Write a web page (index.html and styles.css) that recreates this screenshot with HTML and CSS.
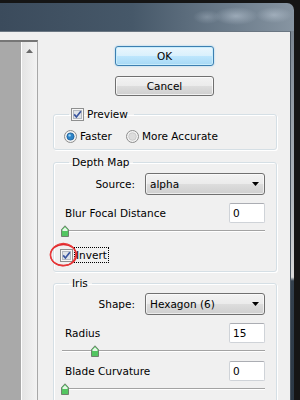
FILE: index.html
```html
<!DOCTYPE html>
<html lang="en">
  <head>
    <meta charset="UTF-8" />
    <title>Lens Blur</title>
    <link rel="stylesheet" href="styles.css">
  </head>
  <body>
    <div class="window">
      <div class="titlebar"></div>
      <div class="frame">
        <div class="client">
          <!-- preview area, cut off at the left -->
          <div class="preview-pane">
            <div class="preview-image"></div>
            <div class="scrollbar">
              <svg class="scroll-up" width="7" height="4" viewBox="0 0 7 4"><path d="M3.5 0L7 4H0z" fill="#6a6a6a"/></svg>
            </div>
          </div>

          <div class="controls">
            <button class="btn btn-default">OK</button>
            <button class="btn">Cancel</button>

            <fieldset class="group group-preview">
              <legend>
                <label class="check">
                  <svg width="13" height="13" viewBox="0 0 13 13"><rect x="0.5" y="0.5" width="12" height="12" fill="#f6f6f6" stroke="#8e8f8f"/><rect x="2.5" y="2.5" width="8" height="8" fill="#dfe3e8" stroke="#b4b9c0"/><path d="M3.2 6.4L5.4 9L9.9 3.2" fill="none" stroke="#3a56a0" stroke-width="1.7"/></svg>
                  Preview
                </label>
              </legend>
              <div class="radio-row">
                <label class="radio">
                  <svg width="13" height="13" viewBox="0 0 13 13"><circle cx="6.5" cy="6.5" r="6" fill="#f3f3f3" stroke="#8c8c8c"/><circle cx="6.5" cy="6.5" r="3.6" fill="#2d84c8" stroke="#1b5c96" stroke-width="0.8"/><circle cx="5.6" cy="5.4" r="1.2" fill="#9fd6f5"/></svg>
                  Faster
                </label>
                <label class="radio">
                  <svg width="13" height="13" viewBox="0 0 13 13"><circle cx="6.5" cy="6.5" r="6" fill="#f3f3f3" stroke="#8c8c8c"/><circle cx="6.5" cy="6.5" r="3.8" fill="#dcdcdc" stroke="#c4c4c4" stroke-width="0.8"/></svg>
                  More Accurate
                </label>
              </div>
            </fieldset>

            <fieldset class="group">
              <legend>Depth Map</legend>
              <div class="field-row">
                <span class="field-label">Source:</span>
                <div class="combo">
                  <span>alpha</span>
                  <svg width="7" height="4" viewBox="0 0 7 4"><path d="M0 0H7L3.5 4z" fill="#000"/></svg>
                </div>
              </div>
              <div class="value-row">
                <span>Blur Focal Distance</span>
                <div class="num-box">0</div>
              </div>
              <div class="slider">
                <div class="slider-track"></div>
                <svg class="thumb" style="left: -1px" width="8" height="12" viewBox="0 0 8 12"><path d="M0.5 4.5L4 0.8L7.5 4.5V11.5H0.5z" fill="#52c660" stroke="#71826f"/><path d="M1.5 4.8L4 2.2L6.5 4.8V6H1.5z" fill="#e6f6e6"/></svg>
              </div>
              <div class="invert-row">
                <span class="check-wrap">
                  <svg width="13" height="13" viewBox="0 0 13 13"><rect x="0.5" y="0.5" width="12" height="12" fill="#f6f6f6" stroke="#8e8f8f"/><rect x="2.5" y="2.5" width="8" height="8" fill="#dfe3e8" stroke="#b4b9c0"/><path d="M3.2 6.4L5.4 9L9.9 3.2" fill="none" stroke="#3a56a0" stroke-width="1.7"/></svg>
                  <svg class="annotation" width="30" height="26" viewBox="0 0 30 26"><ellipse cx="14.5" cy="13" rx="13" ry="10.6" fill="none" stroke="#e0262b" stroke-width="1.5"/><ellipse cx="14" cy="12.6" rx="12.6" ry="11.2" fill="none" stroke="#e83a3a" stroke-width="1.1" transform="rotate(-6 14 12.6)"/></svg>
                </span>
                <span class="focus-label">Invert</span>
              </div>
            </fieldset>

            <fieldset class="group group-iris">
              <legend>Iris</legend>
              <div class="field-row">
                <span class="field-label">Shape:</span>
                <div class="combo">
                  <span>Hexagon (6)</span>
                  <svg width="7" height="4" viewBox="0 0 7 4"><path d="M0 0H7L3.5 4z" fill="#000"/></svg>
                </div>
              </div>
              <div class="value-row">
                <span>Radius</span>
                <div class="num-box">15</div>
              </div>
              <div class="slider">
                <div class="slider-track"></div>
                <svg class="thumb" style="left: 29px" width="8" height="12" viewBox="0 0 8 12"><path d="M0.5 4.5L4 0.8L7.5 4.5V11.5H0.5z" fill="#52c660" stroke="#71826f"/><path d="M1.5 4.8L4 2.2L6.5 4.8V6H1.5z" fill="#e6f6e6"/></svg>
              </div>
              <div class="value-row">
                <span>Blade Curvature</span>
                <div class="num-box">0</div>
              </div>
              <div class="slider">
                <div class="slider-track"></div>
                <svg class="thumb" style="left: -1px" width="8" height="12" viewBox="0 0 8 12"><path d="M0.5 4.5L4 0.8L7.5 4.5V11.5H0.5z" fill="#52c660" stroke="#71826f"/><path d="M1.5 4.8L4 2.2L6.5 4.8V6H1.5z" fill="#e6f6e6"/></svg>
              </div>
            </fieldset>
          </div>
        </div>
      </div>
    </div>
  </body>
</html>
```

FILE: styles.css
```css
* {
  box-sizing: border-box;
}
body {
  margin: 0;
  width: 300px;
  height: 400px;
  overflow: hidden;
  background: #151515;
  font-family: "DejaVu Sans", "Liberation Sans", sans-serif;
  font-size: 10.5px;
  line-height: 13px;
  color: #000;
}
.window {
  margin-top: 3px;
  width: 294px;
  height: 397px;
  display: flex;
  flex-direction: column;
  border-top-right-radius: 7px;
  overflow: hidden;
}
.titlebar {
  flex: none;
  height: 28px;
  background:
    radial-gradient(ellipse 22px 9px at 236px 13px, rgba(200, 212, 225, 0.5), transparent),
    radial-gradient(ellipse 18px 8px at 274px 12px, rgba(200, 212, 225, 0.45), transparent),
    radial-gradient(ellipse 14px 7px at 207px 14px, rgba(200, 212, 225, 0.3), transparent),
    linear-gradient(90deg, #3b4b5c 0%, #465869 45%, #6e7e8d 80%, #8795a2 100%);
}
.frame {
  flex: 1;
  display: flex;
  padding-right: 3px;
  background: linear-gradient(#7a8591 0%, #b2b8be 45%, #d9d9d9 66%, #34414f 67%, #2b3845 100%);
}
.client {
  flex: 1;
  display: flex;
  background: #f0f0f0;
  border-top: 1px solid #6a7682;
  border-right: 1px solid #4a5560;
}

/* preview pane */
.preview-pane {
  flex: none;
  width: 38px;
  margin-top: 8px;
  display: flex;
  border-top: 2px solid #767676;
  border-right: 1px solid #a8a8a8;
}
.preview-image {
  width: 21px;
  background: #a9a9a9;
}
.scrollbar {
  flex: 1;
  display: flex;
  justify-content: center;
  align-items: flex-start;
  padding-top: 7px;
  border-left: 1px solid #fff;
  background: linear-gradient(90deg, #e4e4e4, #f3f3f3);
}

/* right side controls */
.controls {
  flex: 1;
  display: flex;
  flex-direction: column;
  padding: 14px 13px 0 15px;
}
.btn {
  width: 99px;
  height: 20px;
  margin-left: 62px;
  padding: 0;
  font: inherit;
  color: #000;
  border: 1px solid #707070;
  border-radius: 3px;
  background: linear-gradient(#f2f2f2, #ebebeb 50%, #dddddd 50%, #cfcfcf);
  box-shadow: inset 0 0 0 1px rgba(255, 255, 255, 0.7);
}
.btn + .btn {
  margin-top: 10px;
}
.btn-default {
  border-color: #3c7fb1;
  background: linear-gradient(#eaf6fd, #d9f0fc 50%, #bee6fd 50%, #a7d9f5);
  box-shadow: inset 0 0 0 1px #c8ecfb, 0 0 2px #8ccbf0;
}
.group {
  margin: 12px 0 0;
  padding: 4px 11px 8px;
  min-width: 0;
  border: 1px solid #d5dfe5;
  border-radius: 3px;
  box-shadow: 1px 1px 0 #fff, inset 1px 1px 0 #fff;
}
.group + .group {
  margin-top: 6px;
}
.group legend {
  margin-left: 4px;
  padding: 0 4px 0 3px;
  line-height: 13px;
}
.group-preview {
  padding-top: 8px;
  padding-bottom: 5px;
}
.group-preview legend {
  padding: 0 6px 0 2px;
}
.group-iris {
  margin-top: 5px !important;
  padding-top: 3px;
}
.check,
.radio {
  display: flex;
  align-items: center;
  gap: 3px;
}
.radio-row {
  display: flex;
  height: 15px;
  align-items: center;
  margin-left: -1px;
}
.radio:first-child {
  width: 62px;
}
.field-row {
  display: flex;
  align-items: center;
  height: 22px;
}
.field-label {
  width: 70px;
  margin-right: 10px;
  text-align: right;
}
.combo {
  width: 120px;
  height: 22px;
  display: flex;
  align-items: center;
  justify-content: space-between;
  padding: 0 5px 0 4px;
  border: 1px solid #707070;
  border-radius: 3px;
  background: linear-gradient(#f2f2f2, #ebebeb 50%, #dddddd 50%, #cfcfcf);
  box-shadow: inset 0 0 0 1px rgba(255, 255, 255, 0.6);
}
.value-row {
  display: flex;
  align-items: center;
  justify-content: space-between;
  height: 20px;
  margin-top: 8px;
}
.slider + .value-row {
  margin-top: 4px;
}
.num-box {
  width: 36px;
  height: 20px;
  padding: 0 3px;
  line-height: 18px;
  background: #fff;
  border: 1px solid #cfd3d8;
  border-top-color: #abadb3;
  border-radius: 2px;
}
.slider {
  position: relative;
  height: 12px;
  margin: 2px 0 0 -3px;
  padding-top: 5px;
}
.slider-track {
  height: 2px;
  border-top: 1px solid #a3a3a3;
  border-bottom: 1px solid #fff;
}
.thumb {
  position: absolute;
  top: 0;
}
.invert-row {
  display: flex;
  align-items: center;
  height: 16px;
  margin: 10px 0 0 -5px;
}
.check-wrap {
  position: relative;
  display: flex;
}
.annotation {
  position: absolute;
  left: -11px;
  top: -7px;
}
.focus-label {
  margin-left: 1px;
  padding: 0 1px;
  height: 16px;
  line-height: 14px;
  border: 1px dotted #000;
}
```
